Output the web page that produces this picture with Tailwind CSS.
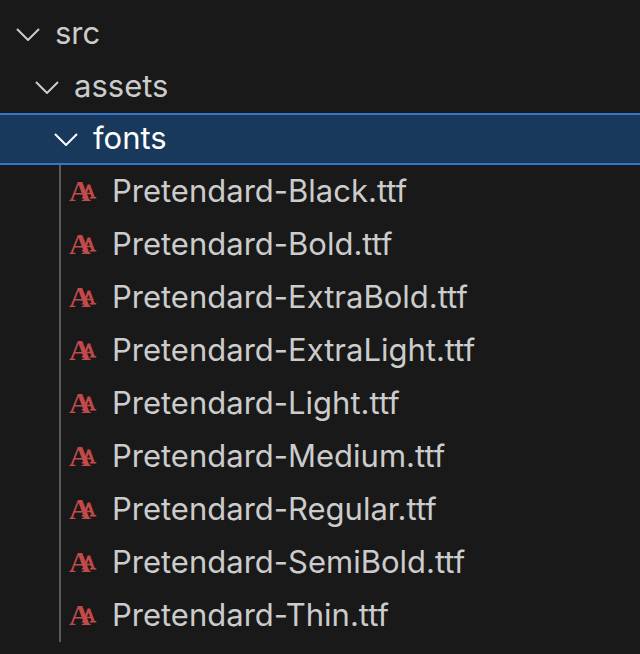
<!DOCTYPE html>
<html lang="en">
<head>
    <meta charset="UTF-8">
    <meta name="viewport" content="width=device-width, initial-scale=1.0">
    <title>Explorer</title>
    <script src="https://cdn.jsdelivr.net/npm/@tailwindcss/browser@4"></script>
</head>
<body class="min-h-screen bg-[#191919] font-['Inter',sans-serif] text-[31px] leading-10 text-[#cccccc]">
    <!-- Icons -->
    <svg class="hidden">
        <symbol id="chevron" viewBox="0 0 24 14">
            <path d="M1 2 L12 13 L23 2" fill="none" stroke="currentColor" stroke-width="2"/>
        </symbol>
        <symbol id="font-file" viewBox="0 0 28 22">
            <text x="0" y="20" font-family="Liberation Serif, serif" font-weight="700" font-size="30" fill="currentColor">A</text>
            <text x="13" y="17" font-family="Liberation Serif, serif" font-weight="400" font-size="19" fill="currentColor" stroke="currentColor" stroke-width="0.9">A</text>
        </symbol>
    </svg>

    <nav aria-label="Files" class="pt-[7px]">
        <button type="button" aria-expanded="true" class="flex h-[53px] w-full items-center gap-[15px] pl-4">
            <svg class="h-[14px] w-6 shrink-0" aria-hidden="true"><use href="#chevron"/></svg>
            <span class="pb-0.5">src</span>
        </button>
        <button type="button" aria-expanded="true" class="flex h-[53px] w-full items-center gap-[15px] pl-[35px]">
            <svg class="h-[14px] w-6 shrink-0" aria-hidden="true"><use href="#chevron"/></svg>
            <span class="pb-0.5">assets</span>
        </button>
        <button type="button" aria-expanded="true" class="flex h-[52px] w-full items-center gap-[15px] border-y-2 border-[#3277cf] bg-[#18395b] pl-[54px] text-white">
            <svg class="h-[14px] w-6 shrink-0" aria-hidden="true"><use href="#chevron"/></svg>
            <span class="pb-0.5">fonts</span>
        </button>

        <ul class="ml-[59px] border-l-2 border-[#5a5a5a]">
            <li><a href="#" class="flex h-[53px] items-center gap-[15px] pl-2"><svg class="h-[22px] w-7 shrink-0 text-[#c24a4a]" aria-hidden="true"><use href="#font-file"/></svg><span class="pb-0.5">Pretendard-Black.ttf</span></a></li>
            <li><a href="#" class="flex h-[53px] items-center gap-[15px] pl-2"><svg class="h-[22px] w-7 shrink-0 text-[#c24a4a]" aria-hidden="true"><use href="#font-file"/></svg><span class="pb-0.5">Pretendard-Bold.ttf</span></a></li>
            <li><a href="#" class="flex h-[53px] items-center gap-[15px] pl-2"><svg class="h-[22px] w-7 shrink-0 text-[#c24a4a]" aria-hidden="true"><use href="#font-file"/></svg><span class="pb-0.5">Pretendard-ExtraBold.ttf</span></a></li>
            <li><a href="#" class="flex h-[53px] items-center gap-[15px] pl-2"><svg class="h-[22px] w-7 shrink-0 text-[#c24a4a]" aria-hidden="true"><use href="#font-file"/></svg><span class="pb-0.5">Pretendard-ExtraLight.ttf</span></a></li>
            <li><a href="#" class="flex h-[53px] items-center gap-[15px] pl-2"><svg class="h-[22px] w-7 shrink-0 text-[#c24a4a]" aria-hidden="true"><use href="#font-file"/></svg><span class="pb-0.5">Pretendard-Light.ttf</span></a></li>
            <li><a href="#" class="flex h-[53px] items-center gap-[15px] pl-2"><svg class="h-[22px] w-7 shrink-0 text-[#c24a4a]" aria-hidden="true"><use href="#font-file"/></svg><span class="pb-0.5">Pretendard-Medium.ttf</span></a></li>
            <li><a href="#" class="flex h-[53px] items-center gap-[15px] pl-2"><svg class="h-[22px] w-7 shrink-0 text-[#c24a4a]" aria-hidden="true"><use href="#font-file"/></svg><span class="pb-0.5">Pretendard-Regular.ttf</span></a></li>
            <li><a href="#" class="flex h-[53px] items-center gap-[15px] pl-2"><svg class="h-[22px] w-7 shrink-0 text-[#c24a4a]" aria-hidden="true"><use href="#font-file"/></svg><span class="pb-0.5">Pretendard-SemiBold.ttf</span></a></li>
            <li><a href="#" class="flex h-[53px] items-center gap-[15px] pl-2"><svg class="h-[22px] w-7 shrink-0 text-[#c24a4a]" aria-hidden="true"><use href="#font-file"/></svg><span class="pb-0.5">Pretendard-Thin.ttf</span></a></li>
        </ul>
    </nav>
</body>
</html>
